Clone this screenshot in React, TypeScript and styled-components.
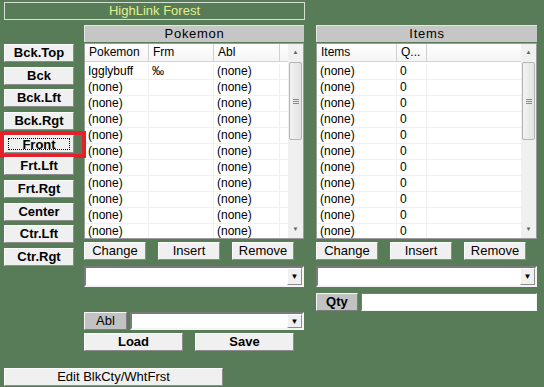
import styled, { createGlobalStyle } from "styled-components";

const GlobalStyle = createGlobalStyle`
  html, body {
    margin: 0;
    padding: 0;
    background: #587b58;
  }
  body {
    font-family: "Liberation Sans", Arial, sans-serif;
  }
`;

const POKEMON_COLS = "64px 65px 66px 1fr";
const ITEM_COLS = "80px 30px 1fr";

const pokemonRows = [
  ["Igglybuff", "‰", "(none)"],
  ...Array.from({ length: 10 }, () => ["(none)", "", "(none)"]),
];
const itemRows = Array.from({ length: 11 }, () => ["(none)", "0", ""]);

const LEFT_BUTTONS = [
  "Bck.Top",
  "Bck",
  "Bck.Lft",
  "Bck.Rgt",
  "Front",
  "Frt.Lft",
  "Frt.Rgt",
  "Center",
  "Ctr.Lft",
  "Ctr.Rgt",
];

const App = () => {
  return (
    <Page>
      <GlobalStyle />
      <TitleBar>HighLink Forest</TitleBar>
      <Body>
        <LeftCol>
          {LEFT_BUTTONS.map((label) =>
            label === "Front" ? (
              <Highlight key={label}>
                <Btn $w={70} $bold>
                  <Focus>{label}</Focus>
                </Btn>
              </Highlight>
            ) : (
              <Btn key={label} $w={70} $bold>
                {label}
              </Btn>
            )
          )}
        </LeftCol>

        <Panel $w={220}>
          <PanelHeader>Pokemon</PanelHeader>
          <ListView
            cols={POKEMON_COLS}
            headers={["Pokemon", "Frm", "Abl", ""]}
            rows={pokemonRows.map((r) => [...r, ""])}
          />
          <BtnRow>
            <Btn $w={62}>Change</Btn>
            <Btn $w={62}>Insert</Btn>
            <Btn $w={62}>Remove</Btn>
          </BtnRow>
          <Combo $h={21} $mt={6}>
            <ComboArrow>▼</ComboArrow>
          </Combo>
          <FieldRow $mt={25}>
            <Tag $w={43}>Abl</Tag>
            <Combo $h={18} $w={174}>
              <ComboArrow>▼</ComboArrow>
            </Combo>
          </FieldRow>
          <BtnRow $mt={3}>
            <Btn $w={99} $bold>
              Load
            </Btn>
            <Btn $w={99} $bold>
              Save
            </Btn>
          </BtnRow>
        </Panel>

        <Panel $w={221} $ml={12}>
          <PanelHeader>Items</PanelHeader>
          <ListView cols={ITEM_COLS} headers={["Items", "Q...", ""]} rows={itemRows} />
          <BtnRow>
            <Btn $w={62}>Change</Btn>
            <Btn $w={62}>Insert</Btn>
            <Btn $w={62}>Remove</Btn>
          </BtnRow>
          <Combo $h={21} $mt={6}>
            <ComboArrow>▼</ComboArrow>
          </Combo>
          <FieldRow $mt={6}>
            <Tag $w={42} $bold>
              Qty
            </Tag>
            <TextBox />
          </FieldRow>
        </Panel>
      </Body>
      <Footer>
        <Btn $w={219}>Edit BlkCty/WhtFrst</Btn>
      </Footer>
    </Page>
  );
};

type ListProps = { cols: string; headers: string[]; rows: string[][] };

const ListView = ({ cols, headers, rows }: ListProps) => (
  <List>
    <Table>
      <HeadRow $cols={cols}>
        {headers.map((h, i) => (
          <HeadCell key={i}>{h}</HeadCell>
        ))}
      </HeadRow>
      {rows.map((row, i) => (
        <Row key={i} $cols={cols}>
          {row.map((c, j) => (
            <Cell key={j}>{c}</Cell>
          ))}
        </Row>
      ))}
    </Table>
    <ScrollBar>
      <ScrollArrow>▲</ScrollArrow>
      <Track>
        <Thumb>
          <Grip />
        </Thumb>
      </Track>
      <ScrollArrow>▼</ScrollArrow>
    </ScrollBar>
  </List>
);

export default App;

const Page = styled.div`
  width: 544px;
  height: 387px;
  box-sizing: border-box;
  padding: 2px 0 0 4px;
  overflow: hidden;
`;

const TitleBar = styled.div`
  width: 301px;
  height: 18px;
  box-sizing: border-box;
  border: 1px solid #d4e0d4;
  color: #e2f28e;
  font-size: 13px;
  line-height: 16px;
  text-align: center;
`;

const Body = styled.div`
  display: flex;
  margin-top: 5px;
`;

const LeftCol = styled.div`
  display: flex;
  flex-direction: column;
  gap: 4.67px;
  padding-top: 19px;
  width: 70px;
`;

const Btn = styled.button<{ $w: number; $bold?: boolean }>`
  width: ${(p) => p.$w}px;
  height: 18px;
  margin: 0;
  padding: 0;
  box-sizing: border-box;
  background: #f0f0f0;
  border: 1px solid;
  border-color: #fbfbfb #8c8c8c #8c8c8c #fbfbfb;
  color: #000;
  font-family: "Liberation Sans", Arial, sans-serif;
  font-size: 13px;
  font-weight: ${(p) => (p.$bold ? 700 : 400)};
  line-height: 16px;
  white-space: nowrap;
  position: relative;
`;

const Focus = styled.span`
  position: absolute;
  inset: 2px 3px;
  border: 1px dotted #000;
  line-height: 12px;
`;

const Highlight = styled.div`
  position: relative;
  width: 70px;
  height: 18px;
  &::after {
    content: "";
    position: absolute;
    left: -4px;
    top: -4px;
    right: -12px;
    bottom: -5px;
    border: 4px solid #e5202a;
    pointer-events: none;
  }
`;

const Panel = styled.div<{ $w: number; $ml?: number }>`
  width: ${(p) => p.$w}px;
  margin-left: ${(p) => p.$ml ?? 10}px;
  display: flex;
  flex-direction: column;
`;

const PanelHeader = styled.div`
  height: 17px;
  box-sizing: border-box;
  background: #c6c6c6;
  border-top: 1px solid #e4e4e4;
  border-left: 1px solid #e4e4e4;
  text-align: center;
  font-size: 13px;
  letter-spacing: 0.7px;
  line-height: 15px;
  color: #000;
`;

const List = styled.div`
  margin-top: 1px;
  height: 196px;
  box-sizing: border-box;
  border: 1px solid #9c9c9c;
  background: #fff;
  display: flex;
  overflow: hidden;
`;

const Table = styled.div`
  flex: 1;
  min-width: 0;
`;

const HeadRow = styled.div<{ $cols: string }>`
  display: grid;
  grid-template-columns: ${(p) => p.$cols};
  height: 18px;
  margin-bottom: 2px;
  box-sizing: border-box;
  border-bottom: 1px solid #d5d5d5;
  background: linear-gradient(#ffffff, #f4f4f4);
`;

const HeadCell = styled.div`
  border-right: 1px solid #d0d0d0;
  padding-left: 4px;
  font-size: 12px;
  line-height: 17px;
  color: #000;
  &:last-child {
    border-right: none;
  }
`;

const Row = styled.div<{ $cols: string }>`
  display: grid;
  grid-template-columns: ${(p) => p.$cols};
  height: 16px;
  box-sizing: border-box;
  border-bottom: 1px solid #f0f0f0;
`;

const Cell = styled.div`
  border-right: 1px solid #f0f0f0;
  padding-left: 3px;
  font-size: 12px;
  line-height: 15px;
  color: #000;
  white-space: nowrap;
  &:last-child {
    border-right: none;
  }
`;

const ScrollBar = styled.div`
  width: 15px;
  display: flex;
  flex-direction: column;
  background: #f0f0f0;
`;

const ScrollArrow = styled.div`
  height: 17px;
  font-size: 6px;
  color: #606060;
  text-align: center;
  line-height: 17px;
`;

const Track = styled.div`
  flex: 1;
  padding: 1px 1px 0 1px;
`;

const Thumb = styled.div`
  height: 78px;
  box-sizing: border-box;
  border: 1px solid #b4b4b4;
  border-radius: 2px;
  background: linear-gradient(90deg, #f2f2f2, #e4e4e4);
  display: flex;
  align-items: center;
  justify-content: center;
`;

const Grip = styled.div`
  width: 6px;
  height: 5px;
  background: repeating-linear-gradient(#8a8a8a 0 1px, transparent 1px 2px);
`;

const BtnRow = styled.div<{ $mt?: number }>`
  display: flex;
  gap: 12px;
  margin-top: ${(p) => p.$mt ?? 3}px;
`;

const Combo = styled.div<{ $h: number; $w?: number; $mt?: number }>`
  position: relative;
  height: ${(p) => p.$h}px;
  width: ${(p) => (p.$w ? `${p.$w}px` : "auto")};
  margin-top: ${(p) => p.$mt ?? 0}px;
  box-sizing: border-box;
  background: #fff;
  border: 2px solid;
  border-color: #7a7a7a #f4f4f4 #f4f4f4 #7a7a7a;
  display: flex;
  justify-content: flex-end;
  align-items: stretch;
`;

const ComboArrow = styled.div`
  width: 15px;
  box-sizing: border-box;
  background: #f0f0f0;
  border: 1px solid;
  border-color: #ffffff #8c8c8c #8c8c8c #ffffff;
  font-size: 8px;
  color: #000;
  display: flex;
  align-items: center;
  justify-content: center;
`;

const FieldRow = styled.div<{ $mt: number }>`
  display: flex;
  gap: 3px;
  margin-top: ${(p) => p.$mt}px;
`;

const Tag = styled.div<{ $w: number; $bold?: boolean }>`
  width: ${(p) => p.$w}px;
  height: 18px;
  box-sizing: border-box;
  background: #c2c2c2;
  border: 1px solid;
  border-color: #f4f4f4 #7c7c7c #7c7c7c #f4f4f4;
  text-align: center;
  font-size: 13px;
  font-weight: ${(p) => (p.$bold ? 700 : 400)};
  line-height: 16px;
  color: #000;
`;

const TextBox = styled.div`
  width: 177px;
  height: 18px;
  box-sizing: border-box;
  background: #fff;
  border: 1px solid;
  border-color: #7a7a7a #f4f4f4 #f4f4f4 #7a7a7a;
`;

const Footer = styled.div`
  margin-top: 16px;
`;
